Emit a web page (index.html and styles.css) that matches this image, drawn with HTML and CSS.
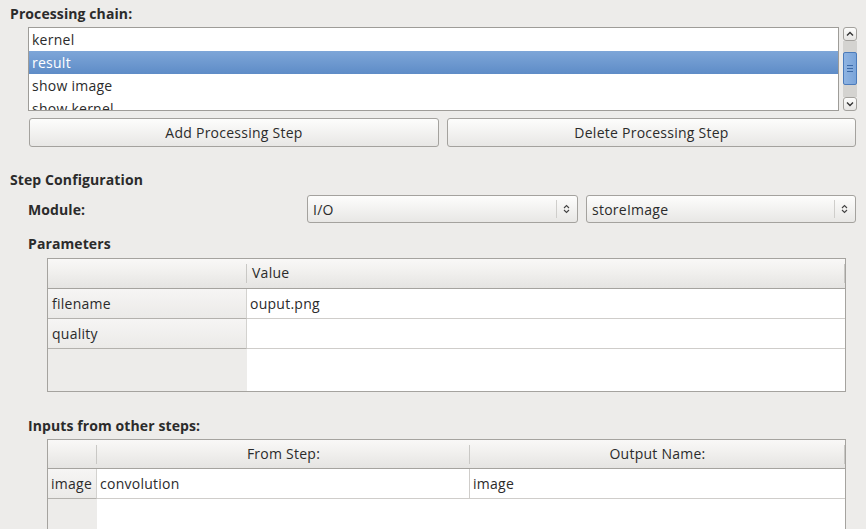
FILE: index.html
```html
<!DOCTYPE html>
<html>
<head>
<meta charset="utf-8">
<link rel="stylesheet" href="styles.css">
</head>
<body>
<div class="page">
  <div class="title">Processing chain:</div>
  <div class="chain">
    <div class="list">
      <div class="item">kernel</div>
      <div class="item sel">result</div>
      <div class="item">show image</div>
      <div class="item">show kernel</div>
    </div>
    <div class="scrollbar">
      <div class="sb-btn"><svg width="8" height="6" viewBox="0 0 8 6"><path d="M1 4.5 L4 1.5 L7 4.5" fill="none" stroke="#333" stroke-width="1.4"/></svg></div>
      <div class="track">
        <div class="thumb"><span></span><span></span><span></span></div>
      </div>
      <div class="sb-btn"><svg width="8" height="6" viewBox="0 0 8 6"><path d="M1 1.5 L4 4.5 L7 1.5" fill="none" stroke="#333" stroke-width="1.4"/></svg></div>
    </div>
  </div>
  <div class="buttons">
    <div class="btn add">Add Processing Step</div>
    <div class="btn del">Delete Processing Step</div>
  </div>

  <div class="title section">Step Configuration</div>
  <div class="module-row">
    <div class="label">Module:</div>
    <div class="combo c1"><span class="ctext">I/O</span><span class="csep"></span><svg class="carrow" width="7" height="10" viewBox="0 0 7 10"><path d="M1 4 L3.5 1.5 L6 4 M1 6 L3.5 8.5 L6 6" fill="none" stroke="#444" stroke-width="1.1"/></svg></div>
    <div class="combo c2"><span class="ctext">storeImage</span><span class="csep"></span><svg class="carrow" width="7" height="10" viewBox="0 0 7 10"><path d="M1 4 L3.5 1.5 L6 4 M1 6 L3.5 8.5 L6 6" fill="none" stroke="#444" stroke-width="1.1"/></svg></div>
  </div>

  <div class="label sub">Parameters</div>
  <div class="grid params">
    <div class="hcell corner"><span class="hsep"></span></div>
    <div class="hcell">Value<span class="hsep"></span></div>
    <div class="vcell">filename</div>
    <div class="dcell">ouput.png</div>
    <div class="vcell">quality</div>
    <div class="dcell"></div>
    <div class="vfill"></div>
    <div class="dfill"></div>
  </div>

  <div class="label sub inputs-label">Inputs from other steps:</div>
  <div class="grid inputs">
    <div class="hcell corner"><span class="hsep"></span></div>
    <div class="hcell center">From Step:<span class="hsep"></span></div>
    <div class="hcell center">Output Name:<span class="hsep"></span></div>
    <div class="vcell small">image</div>
    <div class="dcell sepr">convolution</div>
    <div class="dcell">image</div>
    <div class="vfill"></div>
    <div class="dfill span2"></div>
  </div>
</div>
</body>
</html>
```

FILE: styles.css
```css
* { box-sizing: border-box; }
html, body {
  margin: 0;
  padding: 0;
  background: #edecea;
  width: 866px;
  height: 529px;
  overflow: hidden;
}
body {
  font-family: "Open Sans", "DejaVu Sans", sans-serif;
  font-size: 14px;
  letter-spacing: 0.25px;
  color: #2b2b2b;
}
.page { width: 866px; }

.title {
  height: 27px;
  line-height: 27px;
  padding-left: 10px;
  font-weight: bold;
  letter-spacing: 0.1px;
}
.title.section {
  height: 26px;
  line-height: 26px;
  margin-top: 20px;
}

.chain {
  display: flex;
  margin-left: 28px;
  height: 84px;
  gap: 4px;
}
.list {
  width: 811px;
  height: 84px;
  border: 1px solid #9e9c98;
  background: #fff;
  overflow: hidden;
}
.item {
  height: 23px;
  line-height: 24px;
  padding-left: 3px;
}
.item.sel {
  background: linear-gradient(#7ea6d8, #5e8cc7);
  color: #fff;
}

.scrollbar {
  width: 14px;
  height: 84px;
  display: flex;
  flex-direction: column;
}
.sb-btn {
  height: 14px;
  border: 1px solid #a3a19d;
  border-radius: 3px;
  background: linear-gradient(#fdfdfc, #e6e5e3);
  display: flex;
  align-items: center;
  justify-content: center;
}
.track {
  flex: 1;
  background: #d4d3d0;
  padding-top: 11px;
  padding-bottom: 11px;
}
.thumb {
  height: 33px;
  border: 1px solid #4b7bbb;
  border-radius: 2px;
  background: linear-gradient(90deg, #8fb4e2, #7aa4d9);
  display: flex;
  flex-direction: column;
  align-items: center;
  justify-content: center;
  gap: 2px;
}
.thumb span {
  width: 6px;
  height: 1px;
  background: #3c6aa8;
}

.buttons {
  display: flex;
  gap: 8px;
  margin-top: 7px;
  padding-left: 29px;
}
.btn {
  height: 29px;
  line-height: 28px;
  text-align: center;
  border: 1px solid #a4a29e;
  border-radius: 3px;
  background: linear-gradient(#fdfdfc, #e8e7e5);
}
.btn.add { width: 410px; }
.btn.del { width: 409px; }

.module-row {
  display: flex;
  align-items: center;
  margin-top: 2px;
  padding-left: 28px;
  height: 28px;
}
.label {
  font-weight: bold;
  letter-spacing: 0.1px;
}
.module-row .label { width: 279px; }
.combo {
  height: 28px;
  border: 1px solid #a4a29e;
  border-radius: 3px;
  background: linear-gradient(#fdfdfc, #e8e7e5);
  display: flex;
  align-items: center;
  padding-left: 5px;
}
.combo.c1 { width: 271px; margin-right: 8px; }
.combo.c2 { width: 270px; }
.ctext { flex: 1; }
.csep {
  width: 1px;
  height: 18px;
  background: #cfcecb;
  margin-right: 6px;
}
.carrow { margin-right: 7px; }

.label.sub {
  height: 26px;
  line-height: 26px;
  padding-left: 28px;
  margin-top: 8px;
}
.label.inputs-label { margin-top: 21px; }

.grid {
  margin-left: 47px;
  width: 799px;
  border: 1px solid #a5a39f;
  display: grid;
  background: #fff;
}
.params {
  margin-top: 1px;
  height: 134px;
  grid-template-columns: 199px 1fr;
  grid-template-rows: 30px 30px 30px 1fr;
}
.inputs {
  height: 120px;
  grid-template-columns: 49px 373px 1fr;
  grid-template-rows: 29px 30px 1fr;
}
.hcell {
  position: relative;
  background: linear-gradient(#f9f8f7, #f1f0ee 45%, #e5e4e2);
  border-bottom: 1px solid #a5a39f;
  padding-left: 5px;
  line-height: 28px;
}
.hcell.center { text-align: center; padding-left: 0; }
.hsep {
  position: absolute;
  right: 0;
  top: 5px;
  width: 1px;
  height: 19px;
  background: #c9c8c5;
}
.vcell {
  position: relative;
  background: linear-gradient(#f6f5f4, #ebeae8);
  border-bottom: 1px solid #b3b1ad;
  border-right: 1px solid #d3d2cf;
  padding-left: 4px;
  line-height: 29px;
}
.vcell.small { padding-left: 3px; }
.dcell {
  border-bottom: 1px solid #cfcdca;
  padding-left: 3px;
  line-height: 29px;
}
.dcell.sepr { border-right: 1px solid #cfcdca; }
.vfill { background: #edecea; }
.dfill { background: #fff; }
.dfill.span2 { grid-column: span 2; }
```
